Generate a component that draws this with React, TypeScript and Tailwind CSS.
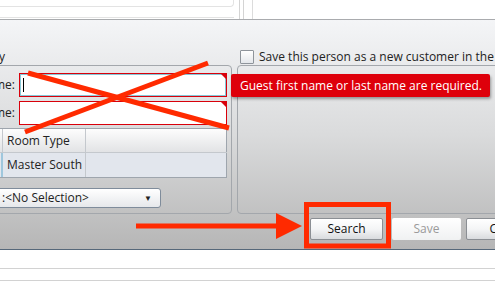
import React from "react";

function TextInput({ label, focused }: { label: string; focused?: boolean }) {
    return (
        <div className="flex items-center">
            <div className="w-[24px] overflow-hidden whitespace-nowrap flex justify-end text-[12px] text-[#222]">
                {label}
            </div>
            <div
                className={`relative ml-[4px] w-[208px] h-[24px] border border-[#d9000b] bg-white ${
                    focused ? "shadow-[inset_0_0_0_1px_#86c8d8]" : ""
                }`}
            >
                {focused && <div className="absolute left-[3px] top-[4px] w-px h-[14px] bg-black" />}
                <div className="absolute right-0 top-0 w-0 h-0 border-t-[5px] border-l-[5px] border-t-[#d9000b] border-l-transparent" />
            </div>
        </div>
    );
}

function Btn({ label, disabled, className }: { label: string; disabled?: boolean; className: string }) {
    return (
        <div
            className={`${className} h-[22px] shrink-0 flex items-center justify-center rounded-[2px] text-[12px] ${
                disabled
                    ? "bg-gradient-to-b from-[#ffffff] to-[#f0f1f2] text-[#9a9a9a]"
                    : "border border-[#8b8f94] bg-gradient-to-b from-[#ffffff] via-[#f4f5f6] to-[#d9dbde] text-[#111]"
            }`}
        >
            {label}
        </div>
    );
}

export default function App() {
    return (
        <div
            className="relative w-[495px] h-[291px] overflow-hidden bg-white text-[#222]"
            style={{ fontFamily: '"Open Sans", "Liberation Sans", Arial, sans-serif' }}
        >
            {/* top strip */}
            <div className="flex h-[20px] border-b border-[#a9abae]">
                <div className="w-[234px] flex flex-col">
                    <div className="h-[7px] border-b border-r border-[#e3e3e3] rounded-br-[4px]" />
                    <div className="mt-[10px] border-b border-[#e3e3e3]" />
                </div>
                <div className="ml-[5px] w-px bg-[#d4d4d4]" />
                <div className="ml-[3px] w-px bg-[#d4d4d4]" />
                <div className="ml-[8px] w-px bg-[#dcdcdc]" />
            </div>

            {/* main panel */}
            <div className="h-[230px] border-b border-[#56687a] bg-gradient-to-b from-[#f4f5f7] via-[#dadbdc] to-[#b6b6b6] flex flex-col">
                <div className="flex items-center h-[14px] mt-[30px]">
                    <div className="w-[240px] shrink-0 text-[12px] leading-none -ml-[1px]">y</div>
                    <div className="ml-[1px] shrink-0 w-[14px] h-[14px] border border-[#8e949b] rounded-[1px] bg-gradient-to-b from-[#ffffff] to-[#e4e7eb]" />
                    <div className="ml-[5px] shrink-0 text-[12px] whitespace-nowrap">Save this person as a new customer in the system</div>
                </div>

                <div className="flex mt-[1px] h-[149px]">
                    <div className="-ml-[10px] w-[242px] shrink-0 border border-[#a3a7ac] rounded-[4px] pt-[7px] flex flex-col">
                        <div className="flex flex-col gap-[4px]">
                            <TextInput label="First Name:" focused />
                            <TextInput label="Last Name:" />
                        </div>

                        <div className="mt-[3px] w-[236px] border-y border-[#9ea5ad] text-[12px]">
                            <div className="flex h-[24px] bg-gradient-to-b from-[#fdfdfd] to-[#e2e3e5] border-b border-[#c4c8cd]">
                                <div className="w-[12px] border-r border-[#c4c8cd]" />
                                <div className="w-[83px] border-r border-[#c4c8cd] flex items-center pl-[4px]">Room Type</div>
                                <div className="flex-1 border-r border-[#9ea5ad]" />
                            </div>
                            <div className="flex h-[24px] bg-[#e2e6ed]">
                                <div className="w-[12px] border-r-2 border-[#9fc7dd]" />
                                <div className="w-[83px] border-r border-[#c4c8cd] flex items-center pl-[4px]">Master South</div>
                                <div className="flex-1 border-r border-[#9ea5ad]" />
                            </div>
                        </div>

                        <div className="mt-[10px] w-[170px] h-[20px] border border-[#7f8c9b] rounded-[3px] bg-gradient-to-b from-[#ffffff] to-[#e6e8eb] flex items-center pl-[10px] pr-[8px] text-[12px]">
                            <span className="flex-1">:&lt;No Selection&gt;</span>
                            <span className="text-[8px] text-[#222]">▼</span>
                        </div>
                    </div>
                    <div className="ml-[5px] flex-1 -mr-[10px] border border-[#a3a7ac] rounded-[4px]" />
                </div>

                <div className="flex mt-[4px] ml-[310px]">
                    <Btn label="Search" className="w-[73px]" />
                    <Btn label="Save" disabled className="ml-[9px] w-[69px]" />
                    <Btn label="Cancel" className="ml-[5px] w-[84px]" />
                </div>
            </div>

            {/* bottom area */}
            <div className="mt-[18px] border-t border-[#d2d2d2]" />
            <div className="mt-[11px] border-t border-[#d2d2d2]" />

            {/* validation tooltip */}
            <div className="absolute left-[231px] top-[74px] w-[259px] h-[23px] bg-[#de000b] rounded-[2px] shadow-[1px_2px_3px_rgba(0,0,0,0.35)] flex items-center pl-[9px] text-[12px] text-white whitespace-nowrap">
                Guest first name or last name are required.
            </div>

            {/* annotations */}
            <svg className="absolute inset-0 pointer-events-none" width="495" height="291" viewBox="0 0 495 291">
                <line x1="28" y1="73" x2="229" y2="128" stroke="#ff2a00" strokeWidth="5" />
                <line x1="208" y1="63" x2="25" y2="132" stroke="#ff2a00" strokeWidth="5" />
                <line x1="136" y1="226" x2="280" y2="226" stroke="#ff2a00" strokeWidth="5" />
                <polygon points="276,213 302,226 276,239" fill="#ff2a00" />
                <rect x="306.5" y="204.5" width="82" height="41.5" fill="none" stroke="#ff2a00" strokeWidth="5" />
            </svg>
        </div>
    );
}
